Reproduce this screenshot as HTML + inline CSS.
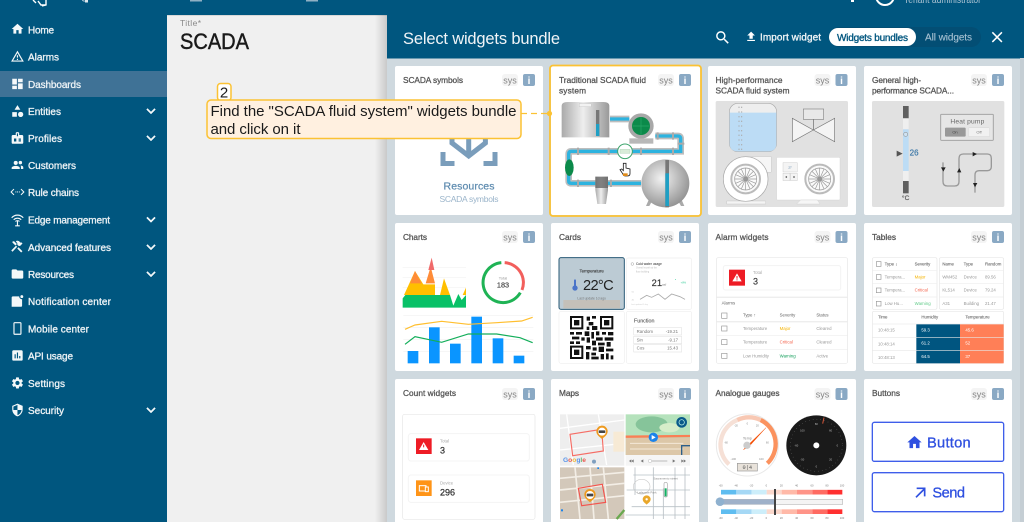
<!DOCTYPE html>
<html><head><meta charset="utf-8"><title>SCADA</title>
<style>
html,body{margin:0;padding:0;width:1024px;height:522px;overflow:hidden;background:#00567f}
svg{display:block;font-family:"Liberation Sans",sans-serif;filter:blur(.3px)}
</style></head><body>
<svg width="1024" height="522" viewBox="0 0 1024 522" xmlns="http://www.w3.org/2000/svg">
<defs>
<linearGradient id="sh" x1="0" x2="1"><stop offset="0" stop-color="#000" stop-opacity="0"/><stop offset="1" stop-color="#000" stop-opacity=".16"/></linearGradient>
<linearGradient id="tank" x1="0" x2="1"><stop offset="0" stop-color="#aaa"/><stop offset=".45" stop-color="#eee"/><stop offset="1" stop-color="#999"/></linearGradient>
<radialGradient id="sph" cx=".42" cy=".4" r=".65"><stop offset="0" stop-color="#f2f2f2"/><stop offset="1" stop-color="#8f8f8f"/></radialGradient>
<path id="chev" d="M7.41 8.59L12 13.17l4.59-4.58L18 10l-6 6-6-6z"/>
<g id="head"><rect x="0" y="8" width="16" height="12" rx="3" fill="#f4f4f4"/><text x="8" y="17.5" text-anchor="middle" font-size="9" fill="#858585">sys</text><rect x="21" y="8" width="12" height="12" rx="2" fill="#8aa9c4"/><text x="27" y="17.8" text-anchor="middle" font-size="10" font-weight="bold" fill="#fff">i</text></g>
<g id="wheel" fill="none" stroke="#999"><circle r="43" stroke-width="6" stroke="#bbb" fill="#fafafa"/><circle r="33" stroke-width="2"/><circle r="7" fill="#777" stroke="none"/><path stroke-width="2" d="M0-33V33M-33 0H33M-23-23L23 23M-23 23L23-23M-13-30L13 30M-30-13L30 13M-13 30L13-30M-30 13L30-13"/></g>
<g id="seg"><rect x="51" width="46" height="14" fill="#5fbdf0"/><rect x="97" width="46" height="14" fill="#a5d8f5"/><rect x="143" width="45" height="14" fill="#cdeefa"/><rect x="188" width="45" height="14" fill="#fbd8cc"/><rect x="233" width="46" height="14" fill="#ffb9a8"/><rect x="279" width="46" height="14" fill="#ff9488"/><rect x="325" width="45" height="14" fill="#ff6b62"/><rect x="370" width="45" height="14" fill="#ff2f2f"/></g>
<path id="pin" d="M0 20C-6 14-17 8-17 -3A17 17 0 0 1 17 -3C17 8 6 14 0 20Z"/>
</defs>

<rect width="1024" height="522" fill="#00567f"/>
<!-- top fragments -->
<g fill="none" stroke="#fff" stroke-width="1.4"><path d="M33 0l3 3M38 1l3 4h5M46 0v5l-4 1"/><circle cx="885" cy="-4" r="9" stroke-width="2"/></g>
<text x="60" y="-1" font-size="11" fill="#cfdde6">ThingsBoard</text>
<rect x="85" y="0" width="3" height="2.500" fill="#dfe8ee"/>
<rect x="190" y="0" width="12" height="1.500" fill="#8fb0c4"/><rect x="306" y="0" width="12" height="1.500" fill="#8fb0c4"/>
<rect x="851" y="0" width="3" height="2" fill="#fff"/>
<text x="904" y="3" font-size="10" fill="#a9c2d2" textLength="77" lengthAdjust="spacingAndGlyphs">Tenant administrator</text>

<!-- sidebar -->
<rect y="71" width="167" height="26" fill="#3f7296"/>
<g fill="#fff" opacity=".96">
<g transform="translate(10.500,22) scale(.58)"><path d="M10 20v-6h4v6h5v-8h3L12 3 2 12h3v8z"/></g>
<g transform="translate(10.500,49.500) scale(.58)"><path d="M1 21h22L12 2 1 21zm3.470-2L12 5.990 19.530 19H4.470zM11 16h2v2h-2zm0-6h2v4h-2z"/></g>
<g transform="translate(10.500,77) scale(.58)"><path d="M3 13h8V3H3v10zm0 8h8v-6H3v6zm10 0h8V11h-8v10zm0-18v6h8V3h-8z"/></g>
<g transform="translate(10.500,104) scale(.58)"><path d="M12 2l5 8H7zM3 14h8v8H3zM17.500 13.500a4.500 4.500 0 1 1-.01 0z"/></g>
<g transform="translate(10.500,131) scale(.58)"><path d="M20 7h-5V4c0-1.100-.9-2-2-2h-2c-1.100 0-2 .9-2 2v3H4c-1.100 0-2 .9-2 2v11c0 1.100.9 2 2 2h16c1.100 0 2-.9 2-2V9c0-1.100-.9-2-2-2zM11 4h2v5h-2zM6 13h4v5H6zm8 0h4v2h-4zm0 3h4v2h-4z" fill-rule="evenodd"/></g>
<g transform="translate(10.500,158) scale(.58)"><path d="M9 12a3.500 3.500 0 1 0 0-7 3.500 3.500 0 0 0 0 7zM2 19v-2c0-2.300 4.500-3.500 7-3.500s7 1.200 7 3.500v2zM17 11a3 3 0 1 0 0-6 3 3 0 0 0 0 6zM17.500 13c2 .2 4.500 1.200 4.500 3v3h-4v-2c0-1.700-.3-3-.5-4z"/></g>
<g transform="translate(10.500,185) scale(.58)" fill="none" stroke="#fff" stroke-width="1.800"><path d="M6 7l-5 5 5 5M18 7l5 5-5 5"/><path d="M8.500 12h1.500M11.500 12h1.500M14.500 12h1.500" stroke-width="2"/></g>
<g transform="translate(10.500,212.500) scale(.58)" fill="none" stroke="#fff" stroke-width="2"><path d="M2 9c5.500-6 14.500-6 20 0M5.500 12.500c3.500-3.500 9.500-3.500 13 0M8.500 15.500c2-1.800 5-1.800 7 0"/><path d="M12 14v9M8 23h8"/></g>
<g transform="translate(10.500,240) scale(.58)"><path d="M13.800 12.500l6.800 6.800-2.200 2.200-6.800-6.800zM17 10a4 4 0 0 1-5.300-4.800L9.200 2.500l1-1c2-.5 4 0 5.500 1.500l1.500 1.500 1.500-.5 2 2-2.800 2.800zM9.500 9.700l2 2-8 8.500-2.200-2.200zM3 3l3-1 5 5-2.500 2.500-5-5z"/></g>
<g transform="translate(10.500,267) scale(.58)"><path d="M10 4H4c-1.100 0-2 .9-2 2v12c0 1.100.9 2 2 2h16c1.100 0 2-.9 2-2V8c0-1.100-.9-2-2-2h-8l-2-2z"/></g>
<g transform="translate(10.500,294) scale(.58)"><path d="M20 9v11c0 1.100-.9 2-2 2H2V6c0-1.100.9-2 2-2h11v0c0 2.800 2.200 5 5 5zM19.500 2a2.500 2.500 0 1 1 0 5 2.500 2.500 0 0 1 0-5z"/></g>
<g transform="translate(10.500,321.500) scale(.58)"><path d="M17 1.010L7 1c-1.100 0-2 .9-2 2v18c0 1.100.9 2 2 2h10c1.100 0 2-.9 2-2V3c0-1.100-.9-1.990-2-1.990zM17 21H7V3h10v18z"/></g>
<g transform="translate(10.500,348.500) scale(.58)"><path d="M19 3H5c-1.100 0-2 .9-2 2v14c0 1.100.9 2 2 2h14c1.100 0 2-.9 2-2V5c0-1.100-.9-2-2-2zM9 17H7v-7h2v7zm4 0h-2V7h2v10zm4 0h-2v-4h2v4z"/></g>
<g transform="translate(10.500,376) scale(.58)"><path d="M19.140 12.940c.04-.3.06-.61.06-.94 0-.32-.02-.64-.07-.94l2.030-1.580c.18-.14.23-.41.12-.61l-1.920-3.320c-.12-.22-.37-.29-.59-.22l-2.390.96c-.5-.38-1.030-.7-1.620-.94l-.36-2.540c-.04-.24-.24-.41-.48-.41h-3.840c-.24 0-.43.17-.47.41l-.36 2.540c-.59.24-1.130.57-1.620.94l-2.390-.96c-.22-.08-.47 0-.59.22L2.740 8.870c-.12.21-.08.47.12.61l2.030 1.580c-.05.3-.09.63-.09.94s.02.64.07.94l-2.030 1.580c-.18.14-.23.41-.12.61l1.920 3.320c.12.22.37.29.59.22l2.390-.96c.5.38 1.030.7 1.620.94l.36 2.540c.05.24.24.41.48.41h3.840c.24 0 .44-.17.47-.41l.36-2.540c.59-.24 1.130-.56 1.620-.94l2.390.96c.22.08.47 0 .59-.22l1.920-3.320c.12-.22.07-.47-.12-.61l-2.010-1.580zM12 15.600c-1.980 0-3.600-1.620-3.600-3.600s1.620-3.600 3.600-3.600 3.600 1.620 3.600 3.600-1.620 3.600-3.600 3.600z"/></g>
<g transform="translate(10.500,403) scale(.58)"><path d="M12 1L3 5v6c0 5.550 3.840 10.740 9 12 5.160-1.260 9-6.450 9-12V5l-9-4zm0 10.990h7c-.53 4.120-3.280 7.790-7 8.940V12H5V6.300l7-3.110v8.800z"/></g>
<g stroke="#fff" stroke-width=".5">
<g transform="translate(142,102) scale(.75)"><use href="#chev"/></g>
<g transform="translate(142,129) scale(.75)"><use href="#chev"/></g>
<g transform="translate(142,210.500) scale(.75)"><use href="#chev"/></g>
<g transform="translate(142,238) scale(.75)"><use href="#chev"/></g>
<g transform="translate(142,265) scale(.75)"><use href="#chev"/></g>
<g transform="translate(142,401) scale(.75)"><use href="#chev"/></g>
</g>
</g>
<g font-size="10" fill="#eef3f6" stroke="#eef3f6" stroke-width=".3">
<text x="28" y="33.500" textLength="26">Home</text>
<text x="28" y="60.500" textLength="31">Alarms</text>
<text x="28" y="87.800" textLength="53">Dashboards</text>
<text x="28" y="115" textLength="33">Entities</text>
<text x="28" y="142" textLength="34">Profiles</text>
<text x="28" y="169" textLength="48">Customers</text>
<text x="28" y="196" textLength="51">Rule chains</text>
<text x="28" y="223.500" textLength="82">Edge management</text>
<text x="28" y="250.800" textLength="83">Advanced features</text>
<text x="28" y="278" textLength="46">Resources</text>
<text x="28" y="305" textLength="83">Notification center</text>
<text x="28" y="332.500" textLength="61">Mobile center</text>
<text x="28" y="359.500" textLength="45">API usage</text>
<text x="28" y="387" textLength="37">Settings</text>
<text x="28" y="414" textLength="36">Security</text>
</g>

<!-- main -->
<rect x="167" y="15" width="220" height="507" fill="#f0f0f0"/>
<rect x="167" y="15" width="220" height="1" fill="#d8d8d8"/>
<text x="180" y="26" font-size="8.500" fill="#888" textLength="21">Title*</text>
<text x="180" y="49" font-size="22" fill="#1a1a1a" stroke="#1a1a1a" stroke-width=".45" textLength="69" lengthAdjust="spacingAndGlyphs">SCADA</text>
<rect x="375" y="15" width="12" height="507" fill="url(#sh)"/>

<!-- panel -->
<rect x="387" y="15" width="637" height="507" fill="#cfd9df"/>
<rect x="387" y="15" width="637" height="43.500" fill="#00567f"/>
<rect x="1020" y="58" width="4" height="464" fill="#c5ced4"/>
<text x="403" y="44" font-size="16.500" fill="#f0f4f7" textLength="157">Select widgets bundle</text>
<g transform="translate(714,29) scale(.72)" fill="#fff"><path d="M15.500 14h-.79l-.28-.27C15.410 12.590 16 11.110 16 9.500 16 5.910 13.090 3 9.500 3S3 5.910 3 9.500 5.910 16 9.500 16c1.610 0 3.090-.59 4.230-1.570l.27.28v.79l5 4.990L20.490 19l-4.990-5zm-6 0C7.010 14 5 11.990 5 9.500S7.010 5 9.500 5 14 7.010 14 9.500 11.990 14 9.500 14z"/></g>
<g transform="translate(744.500,30) scale(.55)" fill="#fff"><path d="M9 16h6v-6h4l-7-7-7 7h4v6zm-4 2h14v2H5z"/></g>
<text x="760" y="40.500" font-size="10" fill="#f2f6f8" stroke="#f2f6f8" stroke-width=".3" textLength="61">Import widget</text>
<rect x="829" y="27" width="152" height="20" rx="10" fill="#034e74"/>
<rect x="829" y="28" width="87" height="18" rx="9" fill="#fff"/>
<text x="837" y="41" font-size="10" fill="#00567f" stroke="#00567f" stroke-width=".35" textLength="71">Widgets bundles</text>
<text x="925" y="40.500" font-size="10" fill="#a8c2d3" stroke="#a8c2d3" stroke-width=".1" textLength="47">All widgets</text>
<g transform="translate(988,28) scale(.76)" fill="#fff"><path d="M19 6.410L17.590 5 12 10.590 6.410 5 5 6.410 10.590 12 5 17.590 6.410 19 12 13.410 17.590 19 19 17.590 13.410 12z"/></g>

<!-- cards -->
<g fill="#fff">
<rect x="395" y="66" width="148" height="149" rx="2"/><rect x="551" y="66" width="150" height="149" rx="2"/><rect x="708" y="66" width="148" height="149" rx="2"/><rect x="864" y="66" width="148" height="149" rx="2"/>
<rect x="395" y="223" width="148" height="148" rx="2"/><rect x="551" y="223" width="148" height="148" rx="2"/><rect x="708" y="223" width="148" height="148" rx="2"/><rect x="864" y="223" width="148" height="148" rx="2"/>
<rect x="395" y="379" width="148" height="150" rx="2"/><rect x="551" y="379" width="148" height="150" rx="2"/><rect x="708" y="379" width="148" height="150" rx="2"/><rect x="864" y="379" width="148" height="150" rx="2"/>
</g>
<rect x="550" y="65.500" width="151" height="150.500" rx="3" fill="none" stroke="#fbc234" stroke-width="1.800"/>
<use href="#head" x="502" y="66"/><use href="#head" x="658" y="66"/><use href="#head" x="814.500" y="66"/><use href="#head" x="971" y="66"/>
<use href="#head" x="502" y="223"/><use href="#head" x="658" y="223"/><use href="#head" x="814.500" y="223"/><use href="#head" x="971" y="223"/>
<use href="#head" x="502" y="380"/><use href="#head" x="658" y="380"/><use href="#head" x="814.500" y="380"/><use href="#head" x="971" y="380"/>
<g font-size="8.300" fill="#555" stroke="#555" stroke-width=".28">
<text x="403" y="83" textLength="60">SCADA symbols</text>
<text x="559" y="83" textLength="87">Traditional SCADA fluid</text><text x="559" y="93.500" textLength="27">system</text>
<text x="715.500" y="83" textLength="67">High-performance</text><text x="715.500" y="93.500" textLength="74">SCADA fluid system</text>
<text x="872" y="83" textLength="49">General high-</text><text x="872" y="93.500" textLength="82">performance SCADA...</text>
<text x="403" y="240" textLength="24">Charts</text><text x="559" y="240" textLength="22">Cards</text><text x="715.500" y="240" textLength="53">Alarm widgets</text><text x="872" y="240" textLength="24">Tables</text>
<text x="403" y="396" textLength="53">Count widgets</text><text x="559" y="396" textLength="20">Maps</text><text x="715.500" y="396" textLength="64">Analogue gauges</text><text x="872" y="396" textLength="28">Buttons</text>
</g>

<!-- card 1 content -->
<g fill="none" stroke="#7a9dbb" stroke-width="5">
<path d="M443 152v11.500h11.500M483.500 163.500h11.500v-11.500"/>
<path d="M468.700 136V155M452 136v7l16.700 13 16.700-13v-7"/>
</g>
<text x="469" y="189.500" font-size="10.500" text-anchor="middle" fill="#5f8cb0" stroke="#5f8cb0" stroke-width=".25" textLength="51">Resources</text>
<text x="469" y="202" font-size="8.500" text-anchor="middle" fill="#9ab4ca" textLength="59">SCADA symbols</text>

<!-- card 2 illustration -->
<g transform="translate(386,0) scale(.33333)">
<g fill="none" stroke="#bdbdbd" stroke-width="20"><path d="M672 357H730M808 408H876Q884 408 884 416V454H556Q548 454 548 462V543Q548 550 556 550H765"/></g>
<g fill="none" stroke="#2db3df" stroke-width="10"><path d="M672 357H730M808 408H876Q884 408 884 416V454H556Q548 454 548 462V543Q548 550 556 550H765"/></g>
<g fill="#aaa"><rect x="573" y="443" width="6" height="22"/><rect x="665" y="443" width="6" height="22"/><rect x="762" y="443" width="6" height="22"/><rect x="858" y="443" width="6" height="22"/><rect x="858" y="397" width="6" height="22"/><rect x="812" y="397" width="6" height="22"/><rect x="875" y="428" width="20" height="6"/><rect x="573" y="539" width="6" height="22"/><rect x="672" y="539" width="6" height="22"/></g>
<path d="M527 318Q527 306 545 306H652Q670 306 670 318V412H527Z" fill="url(#tank)"/>
<rect x="580" y="311" width="36" height="9" fill="#f2f2f2" stroke="#bbb"/>
<rect x="630" y="330" width="10" height="78" fill="#777"/><rect x="630" y="372" width="10" height="36" fill="#1f9fc4"/>
<circle cx="765" cy="378" r="38" fill="#a8a8a8"/><rect x="730" y="415" width="72" height="16" fill="#b8b8b8"/>
<circle cx="765" cy="378" r="27" fill="#0b8a4a"/>
<path d="M765 353V403M740 378H790" stroke="#2aa868" stroke-width="2"/>
<circle cx="717" cy="454" r="22" fill="#fff" stroke="#3ea56d" stroke-width="3"/>
<path d="M702 448H732V460H702z" fill="#d8ecd8" stroke="#9cc9a8"/>
<ellipse cx="550" cy="503" rx="13" ry="25" fill="#0b8a4a"/>
<path d="M628 530H666V570L660 612H634L628 570Z" fill="url(#tank)"/><rect x="628" y="530" width="38" height="34" fill="#666" opacity=".8"/>
<path d="M790 595L780 618H790L800 600ZM885 595L895 618H885L875 600Z" fill="#aaa"/>
<circle cx="838" cy="550" r="72" fill="url(#sph)"/>
<rect x="838" y="480" width="11" height="142" fill="#777"/><rect x="838" y="520" width="11" height="98" fill="#1f9fc4"/>
<path d="M712 490h8v14l12 3v14q0 7-8 7h-6q-5 0-8-7l-8-12 5-2 5 5z" fill="#fff" stroke="#222" stroke-width="2.500"/>
<rect x="711" y="520" width="14" height="8" fill="#e08b1a"/>
</g>

<!-- card 3 illustration -->
<g transform="translate(704,0) scale(.33333)">
<rect x="35" y="303" width="397" height="318" rx="5" fill="#e1e1e1"/>
<rect x="76" y="310" width="142" height="145" rx="26" fill="#eee" stroke="#aaa" stroke-width="2"/>
<path d="M77 338H217V430Q217 454 192 454H102Q77 454 77 430Z" fill="#bcdcf5"/>
<path d="M105 320V450M113 320V450" stroke="#aaa" stroke-width="3" stroke-dasharray="4 10"/>
<rect x="298" y="327" width="61" height="31" fill="#e8e8e8" stroke="#888" stroke-width="2"/>
<path d="M328 358V390" stroke="#666" stroke-width="2"/>
<path d="M265 355L328 390L392 355V425L328 390L265 425Z" fill="#f4f4f4" stroke="#777" stroke-width="2"/>
<rect x="135" y="470" width="67" height="47" fill="#f6f6f6" stroke="#bbb"/>
<rect x="68" y="603" width="117" height="9" fill="#f4f4f4" stroke="#bbb"/>
<circle cx="125" cy="537" r="67" fill="#fff" stroke="#aaa" stroke-width="2"/>
<use href="#wheel" x="125" y="537"/>
<rect x="218" y="472" width="190" height="128" rx="3" fill="#fff" stroke="#ccc"/>
<path d="M290 600H340L348 612H278Z" fill="#f6f6f6" stroke="#ccc"/>
<use href="#wheel" x="347" y="537"/>
<rect x="237" y="488" width="43" height="28" fill="#f4f4f4" stroke="#bbb"/><text x="258" y="505" font-size="9" text-anchor="middle" fill="#4a78a0">27</text>
<rect x="237" y="520" width="21" height="22" fill="#f4f4f4" stroke="#bbb"/><rect x="260" y="520" width="20" height="22" fill="#f4f4f4" stroke="#bbb"/>
<circle cx="247" cy="531" r="2.500" fill="#555"/><circle cx="270" cy="531" r="2.500" fill="#555"/>
</g>

<!-- card 4 illustration -->
<g transform="translate(704,0) scale(.33333)">
<rect x="504" y="303" width="397" height="318" rx="5" fill="#e1e1e1"/>
<rect x="597" y="318" width="17" height="37" fill="#5f5f5f"/><rect x="597" y="355" width="17" height="33" fill="#efefef"/><rect x="597" y="388" width="17" height="125" fill="#bcdcf5"/><rect x="597" y="513" width="17" height="30" fill="#efefef"/><rect x="597" y="543" width="17" height="37" fill="#5f5f5f"/>
<circle cx="605" cy="403" r="6" fill="#cfe3f3" stroke="#999" stroke-width="2"/>
<path d="M578 452L596 461L578 470Z" fill="#555"/>
<text x="617" y="467" font-size="24" fill="#3e79a8" stroke="#3e79a8" stroke-width=".6">26</text>
<text x="605" y="600" font-size="20" text-anchor="middle" fill="#555" stroke="#555" stroke-width=".4">°C</text>
<rect x="710" y="343" width="158" height="78" rx="2" fill="#e6e6e6" stroke="#a5a5a5" stroke-width="3"/>
<text x="790" y="370" font-size="20" text-anchor="middle" fill="#666" textLength="102">Heat pump</text>
<rect x="723" y="383" width="62" height="27" rx="3" fill="#999"/><rect x="793" y="383" width="64" height="27" rx="3" fill="#f1f1f1" stroke="#ccc"/>
<text x="753" y="401" font-size="12" text-anchor="middle" fill="#444">On</text><text x="825" y="401" font-size="12" text-anchor="middle" fill="#777">Off</text>
<path d="M717 487V545Q717 558 730 558H752Q765 558 765 545V475Q765 462 778 462H850Q862 462 862 475V500Q862 512 850 512H825Q813 512 813 525V578" fill="none" stroke="#999" stroke-width="4"/>
<path d="M711 502H725L718 515ZM759 517H772L766 504ZM806 456V469L819 462ZM807 549H820L813 562Z" fill="#222"/>
</g>

<!-- charts -->
<g transform="translate(390,220) scale(.33333)">
<path d="M38 142H228M38 172H228M38 202H228" stroke="#f2f2f2" stroke-width="2"/>
<path d="M42 225L75 153L100 193H135V225ZM150 225L162 175L180 225ZM218 225L228 203V225Z" fill="#ffbf00"/>
<path d="M60 190L75 153L95 190ZM107 190L122 140L135 190Z" fill="#ff8c38"/>
<path d="M115 150L125 113L133 150Z" fill="#f06a6a"/>
<path d="M38 263V235L46 225H180L190 257L205 222L215 240L228 225V263Z" fill="#08c167"/>
<path d="M344 128A60 60 0 0 1 396 210" fill="none" stroke="#f25f5c" stroke-width="9"/>
<path d="M334 128A60 60 0 1 0 391 218" fill="none" stroke="#1fb355" stroke-width="9"/>
<text x="339" y="179" font-size="12" text-anchor="middle" fill="#999">Total</text>
<text x="339" y="203" font-size="22" text-anchor="middle" fill="#444" stroke="#444" stroke-width=".5">183</text>
<path d="M40 287H430M40 322H430M40 358H430M40 394H430" stroke="#f0f0f0" stroke-width="2"/>
<g fill="#0a95ff"><rect x="53" y="393" width="32" height="37"/><rect x="117" y="322" width="32" height="108"/><rect x="180" y="371" width="32" height="59"/><rect x="244" y="290" width="32" height="140"/><rect x="308" y="355" width="32" height="75"/><rect x="371" y="407" width="32" height="23"/></g>
<path d="M45 328L75 315L155 304L235 313L320 308L395 303L428 292" fill="none" stroke="#ffbf2f" stroke-width="3.500"/>
<path d="M45 373L75 350L155 367L235 342L320 342L390 353L428 368" fill="none" stroke="#13ae5a" stroke-width="3.500"/>
</g>

<!-- cards card -->
<g transform="translate(390,220) scale(.33333)">
<rect x="507" y="113" width="196" height="155" rx="6" fill="#bccbd4" stroke="#2a5b77" stroke-width="3"/>
<rect x="520" y="240" width="170" height="25" fill="#c9b9a6" opacity=".6"/>
<text x="605" y="157" font-size="13" text-anchor="middle" fill="#333" stroke="#333" stroke-width=".3">Temperature</text>
<text x="625" y="210" font-size="44" text-anchor="middle" fill="#222" textLength="92">22°C</text>
<rect x="552" y="178" width="6" height="24" rx="3" fill="#4a74c9"/><circle cx="555" cy="204" r="8" fill="#4a74c9"/>
<text x="605" y="238" font-size="10" text-anchor="middle" fill="#777">Last update 1d ago</text>
<rect x="709" y="114" width="196" height="154" rx="6" fill="#fff" stroke="#eee" stroke-width="2"/>
<circle cx="727" cy="132" r="4" fill="none" stroke="#777"/>
<text x="738" y="135" font-size="10" fill="#555" stroke="#555" stroke-width=".2">Cold water usage</text>
<text x="738" y="146" font-size="7" fill="#bbb">Overall month at the</text><text x="738" y="157" font-size="7" fill="#bbb">floor building</text>
<text x="785" y="198" font-size="28" fill="#333" stroke="#333" stroke-width=".5">21</text><text x="817" y="198" font-size="10" fill="#888">ref</text>
<text x="855" y="182" font-size="9" fill="#3c9">▪</text><text x="872" y="190" font-size="8" fill="#3c9">+8%</text>
<path d="M750 238L770 226L785 232L805 222L825 238L845 222L870 230L885 238" fill="none" stroke="#aaa" stroke-width="2.500"/>
<text x="725" y="218" font-size="6" fill="#bbb">55</text><text x="725" y="241" font-size="6" fill="#bbb">45</text><text x="723" y="255" font-size="6" fill="#ccc">Last updated 1 day</text>
<rect x="507" y="274" width="196" height="156" rx="6" fill="#fff" stroke="#eee" stroke-width="2"/>
<g fill="#111">
<path d="M540 288h40v40h-40zm6 6v28h28v-28zm6 6h16v16h-16z" fill-rule="evenodd"/>
<path d="M630 288h40v40h-40zm6 6v28h28v-28zm6 6h16v16h-16z" fill-rule="evenodd"/>
<path d="M540 377h40v40h-40zm6 6v28h28v-28zm6 6h16v16h-16z" fill-rule="evenodd"/>
<path d="M590 290h10v12h-10zM606 288h12v8h-12zM596 306h14v10h-14zM590 320h8v10h-8zM606 318h16v12h-16zM540 336h12v8h-12zM558 336h18v8h-18zM584 334h14v14h-14zM604 336h8v20h-8zM618 334h10v12h-10zM636 336h12v8h-12zM654 336h16v10h-16zM546 350h22v8h-22zM574 352h10v10h-10zM590 352h10v16h-10zM618 352h20v10h-20zM644 352h26v10h-26zM540 364h12v8h-12zM558 364h12v8h-12zM606 362h12v14h-12zM624 368h20v8h-20zM650 366h12v14h-12zM588 378h14v10h-14zM608 382h12v10h-12zM626 380h16v16h-16zM648 386h22v8h-22zM588 396h10v22h-10zM604 398h14v8h-14zM604 410h22v8h-22zM632 402h10v16h-10zM648 400h8v18h-8zM662 406h8v12h-8z"/>
</g>
<rect x="709" y="274" width="196" height="156" rx="6" fill="#fff" stroke="#eee" stroke-width="2"/>
<text x="732" y="307" font-size="16" fill="#555" stroke="#555" stroke-width=".3">Function</text>
<g fill="#fff" stroke="#e6e6e6" stroke-width="2"><rect x="731" y="323" width="144" height="22"/><rect x="731" y="349" width="144" height="22"/><rect x="731" y="374" width="144" height="22"/></g>
<g font-size="13" fill="#777"><text x="740" y="339">Random</text><text x="740" y="364">Sin</text><text x="740" y="389">Cos</text><text x="864" y="339" text-anchor="end">-19.21</text><text x="864" y="364" text-anchor="end">-9.17</text><text x="864" y="389" text-anchor="end">15.43</text></g>
</g>

<!-- alarm -->
<g transform="translate(704,220) scale(.33333)">
<rect x="37" y="113" width="394" height="317" rx="6" fill="#fff" stroke="#e6e6e6" stroke-width="2"/>
<rect x="58" y="137" width="352" height="73" rx="6" fill="#fff" stroke="#f3f3f3" stroke-width="3"/>
<rect x="75" y="149" width="48" height="48" fill="#ee1c25"/>
<path d="M99 160L113 184H85Z" fill="#fff"/><rect x="97.500" y="168" width="3" height="8" fill="#ee1c25"/><rect x="97.500" y="178" width="3" height="3" fill="#ee1c25"/>
<text x="147" y="162" font-size="13" fill="#aaa">Total</text>
<text x="147" y="194" font-size="27" fill="#333" stroke="#333" stroke-width=".4">3</text>
<path d="M38 232H430" stroke="#eee" stroke-width="4"/>
<text x="53" y="253" font-size="13" fill="#666">Alarms</text>
<path d="M38 305H430" stroke="#eee" stroke-width="4"/><path d="M38 346H430M38 388H430" stroke="#eee" stroke-width="2"/>
<g fill="#fff" stroke="#999" stroke-width="2"><rect x="53" y="279" width="16" height="16"/><rect x="53" y="318" width="16" height="15"/><rect x="53" y="359" width="16" height="15"/><rect x="53" y="400" width="16" height="15"/></g>
<g font-size="13" fill="#666"><text x="117" y="289">Type ↑</text><text x="227" y="289">Severity</text><text x="337" y="289">Status</text></g>
<g font-size="13" fill="#999"><text x="117" y="330">Temperature</text><text x="117" y="371">Temperature</text><text x="117" y="412">Low Humidity</text><text x="337" y="330">Cleared</text><text x="337" y="371">Cleared</text><text x="337" y="412">Active</text></g>
<text x="227" y="330" font-size="13" fill="#f5b301">Major</text><text x="227" y="371" font-size="13" fill="#f4664f">Critical</text><text x="227" y="412" font-size="13" fill="#0f9d58">Warning</text>
</g>

<!-- tables -->
<g transform="translate(704,220) scale(.33333)">
<rect x="505" y="113" width="194" height="155" rx="5" fill="#fff" stroke="#e6e6e6" stroke-width="2"/>
<rect x="706" y="113" width="193" height="155" rx="5" fill="#fff" stroke="#e6e6e6" stroke-width="2"/>
<rect x="505" y="274" width="394" height="156" rx="5" fill="#fff" stroke="#e6e6e6" stroke-width="2"/>
<path d="M505 151H699M505 191H699M505 231H699M706 151H899M706 191H899M706 231H899" stroke="#eee" stroke-width="2"/>
<g fill="#fff" stroke="#999" stroke-width="2"><rect x="517" y="125" width="14" height="14"/><rect x="517" y="164" width="14" height="14"/><rect x="517" y="204" width="14" height="14"/><rect x="517" y="244" width="14" height="14"/></g>
<g font-size="13" fill="#666" stroke="#666" stroke-width=".2"><text x="542" y="136">Type ↓</text><text x="632" y="136">Severity</text><text x="715" y="136">Name</text><text x="779" y="136">Type</text><text x="843" y="136">Random</text><text x="522" y="296">Time</text><text x="652" y="296">Humidity</text><text x="784" y="296">Temperature</text></g>
<g font-size="13" fill="#999"><text x="542" y="176">Tempera...</text><text x="542" y="215">Tempera...</text><text x="542" y="255">Low Hu...</text><text x="715" y="176">WM452</text><text x="715" y="215">KL514</text><text x="715" y="255">A31</text><text x="779" y="176">Device</text><text x="779" y="215">Device</text><text x="779" y="255">Building</text><text x="843" y="176">89.56</text><text x="843" y="215">79.24</text><text x="843" y="255">21.47</text><text x="522" y="335">10:48:15</text><text x="522" y="376">10:48:14</text><text x="522" y="417">10:48:13</text></g>
<text x="632" y="176" font-size="13" fill="#f5b301">Major</text><text x="632" y="215" font-size="13" fill="#f4664f">Critical</text><text x="632" y="255" font-size="13" fill="#5fca87">Warning</text>
<path d="M505 312H899" stroke="#eee" stroke-width="2"/>
<rect x="637" y="313" width="131" height="117" fill="#005580"/><rect x="768" y="313" width="131" height="117" fill="#ff7f57"/>
<path d="M505 352H899M505 392H899" stroke="#e6e6e6" stroke-width="2"/>
<g font-size="13" fill="#fff"><text x="652" y="335">59.3</text><text x="652" y="374">61.2</text><text x="652" y="414">64.5</text><text x="784" y="335">45.6</text><text x="784" y="374">52</text><text x="784" y="414">37</text></g>
</g>

<!-- count -->
<g transform="translate(390,375) scale(.33333)">
<rect x="38" y="118" width="397" height="315" rx="6" fill="#fff" stroke="#e6e6e6" stroke-width="2"/>
<rect x="55" y="176" width="363" height="82" rx="8" fill="#fff" stroke="#f4f4f4" stroke-width="3"/>
<rect x="55" y="300" width="363" height="82" rx="8" fill="#fff" stroke="#f4f4f4" stroke-width="3"/>
<rect x="78" y="190" width="47" height="47" fill="#ee1c25"/>
<path d="M101 201L115 225H87Z" fill="#fff"/><rect x="99.500" y="209" width="3" height="8" fill="#ee1c25"/>
<rect x="78" y="316" width="47" height="47" fill="#ff9417"/>
<rect x="88" y="332" width="20" height="16" fill="none" stroke="#fff" stroke-width="3"/><rect x="106" y="336" width="9" height="14" fill="#ff9417" stroke="#fff" stroke-width="3"/>
<text x="150" y="202" font-size="13" fill="#aaa">Total</text><text x="150" y="235" font-size="27" fill="#333" stroke="#333" stroke-width=".7">3</text>
<text x="150" y="329" font-size="13" fill="#aaa">Device</text><text x="150" y="361" font-size="27" fill="#333" stroke="#333" stroke-width=".8">296</text>
</g>

<!-- maps -->
<g transform="translate(390,375) scale(.33333)">
<rect x="510" y="118" width="193" height="154" fill="#eeeeee"/>
<path d="M530 118L550 270M625 118L650 270M510 160L703 135M510 225L703 205" stroke="#fff" stroke-width="4" fill="none"/>
<rect x="670" y="170" width="33" height="60" fill="#f7ead5"/>
<path d="M540 178L635 163L640 228L548 242Z" fill="none" stroke="#f56d65" stroke-width="3.500"/>
<use href="#pin" x="636" y="172" fill="#ee9a1f"/><circle cx="636" cy="170" r="12" fill="#fff"/><rect x="626" y="166" width="20" height="8" rx="2" fill="#444"/>
<g font-size="20" font-weight="bold"><text x="519" y="261" fill="#5a94e8">G<tspan fill="#e8594d">o</tspan><tspan fill="#f0b93a">o</tspan><tspan fill="#5a94e8">g</tspan><tspan fill="#5cb36b">l</tspan><tspan fill="#e8594d">e</tspan></text></g>
<circle cx="612" cy="260" r="6" fill="#7f9fbf"/>
<rect x="707" y="118" width="193" height="122" fill="#b5e2bc"/>
<ellipse cx="785" cy="148" rx="48" ry="24" fill="#86c49a"/><ellipse cx="838" cy="158" rx="30" ry="14" fill="#d6edc9"/>
<rect x="707" y="188" width="193" height="52" fill="#dcc7a8"/>
<path d="M707 185L900 183" stroke="#fa7f55" stroke-width="7"/>
<path d="M720 205H880M720 222H880" stroke="#f4e9d7" stroke-width="3"/>
<path d="M875 240V212H900" stroke="#2d5f8a" stroke-width="4" fill="none"/>
<circle cx="790" cy="187" r="14" fill="#1b83ea"/><path d="M785 180L797 187L785 194Z" fill="#fff"/>
<circle cx="875" cy="142" r="16" fill="#0a5a8a"/><circle cx="875" cy="142" r="8" fill="none" stroke="#cfe" stroke-width="2"/>
<rect x="707" y="240" width="193" height="32" fill="#f5f5f5"/>
<path d="M717 253L724 258V253L731 258L724 263V258L717 263Z" fill="#777" transform="matrix(-1 0 0 1 1448 0)"/>
<path d="M760 253V263L752 258ZM848 253V263L856 258ZM874 253L881 258V253L888 258L881 263V258L874 263Z" fill="#777"/>
<path d="M785 258H832" stroke="#bbb" stroke-width="3"/><circle cx="780" cy="258" r="5" fill="#fff" stroke="#999"/>
<rect x="510" y="277" width="193" height="155" fill="#d3c8ba"/>
<path d="M555 277L570 432M640 277L655 432M510 310L703 292M510 382L703 362M510 345L703 325M600 277L612 432" stroke="#f3eee6" stroke-width="5" fill="none"/>
<path d="M565 340L637 328L647 382L575 392Z" fill="none" stroke="#f2564f" stroke-width="3.500"/>
<use href="#pin" x="600" y="362" fill="#ee9a1f"/><circle cx="600" cy="360" r="12" fill="#fff"/><rect x="590" y="356" width="20" height="8" rx="2" fill="#444"/>
<path d="M680 432L703 405" stroke="#6aa84f" stroke-width="7"/><rect x="513" y="403" width="6" height="6" fill="#1b83ea"/><rect x="622" y="277" width="5" height="5" fill="#1b83ea"/>
<rect x="707" y="277" width="193" height="155" fill="#fff"/>
<path d="M730 300H900M710 345H900M790 277V432M855 277V432M885 277V432M725 395H900M735 277V360M707 420H900M820 340V432" stroke="#b9c1c6" stroke-width="2.500" fill="none"/>
<ellipse cx="755" cy="335" rx="25" ry="22" fill="none" stroke="#ccc" stroke-width="2"/>
<text x="790" y="314" font-size="9" fill="#888">Sacramento street</text><text x="742" y="355" font-size="9" fill="#888">Lafayette Park</text>
<rect x="822" y="322" width="10" height="44" rx="5" fill="#fff" stroke="#aaa" stroke-width="2"/><rect x="824" y="340" width="6" height="24" fill="#12b163"/>
<g transform="translate(770,375) scale(.7)"><use href="#pin" fill="#e9a72a"/><circle cy="-3" r="5" fill="#fff"/></g>
</g>

<!-- gauges -->
<g transform="translate(704,375) scale(.33333)">
<circle cx="130" cy="210" r="93" fill="#fff" stroke="#e8e8e8" stroke-width="3"/>
<path d="M75 268A80 80 0 0 1 100 135" fill="none" stroke="#f6e0d6" stroke-width="13"/>
<path d="M100 135A80 80 0 0 1 170 135" fill="none" stroke="#f8c8b3" stroke-width="13"/>
<path d="M170 135A80 80 0 0 1 190 265" fill="none" stroke="#fb925e" stroke-width="13"/>
<g font-size="8" fill="#888" text-anchor="middle"><text x="88" y="255">-100</text><text x="66" y="205">-60</text><text x="96" y="155">-20</text><text x="130" y="148">0</text><text x="160" y="155">20</text><text x="190" y="205">60</text><text x="172" y="255">100</text></g>
<text x="130" y="193" font-size="11" text-anchor="middle" fill="#888">Temp</text>
<path d="M118 224L186 158L134 216Z" fill="#f54b00" stroke="#f54b00"/>
<circle cx="129" cy="211" r="11" fill="#ccc"/>
<rect x="100" y="265" width="60" height="23" fill="#e8e2da" stroke="#999" stroke-width="2"/>
<text x="130" y="282" font-size="16" text-anchor="middle" fill="#555" font-family="Liberation Mono">0|4</text>
<circle cx="337" cy="211" r="90" fill="#1a1a1a"/>
<circle cx="337" cy="211" r="78" fill="none" stroke="#777" stroke-width="2" stroke-dasharray="1.500 10"/>
<path d="M360 128L356 146" stroke="#d2563a" stroke-width="3"/>
<g font-size="8" fill="#bbb" text-anchor="middle"><text x="337" y="150">80</text><text x="295" y="170">100</text><text x="380" y="170">60</text><text x="277" y="214">-60</text><text x="400" y="214">0</text><text x="295" y="256">-50</text><text x="380" y="256">20</text><text x="337" y="277">0</text></g>
<circle cx="337" cy="211" r="9" fill="#fff"/>
<g font-size="8" fill="#777" text-anchor="middle"><text x="50" y="335">-60</text><text x="96" y="335">-40</text><text x="142" y="335">-20</text><text x="187" y="335">0</text><text x="232" y="335">20</text><text x="278" y="335">40</text><text x="324" y="335">60</text><text x="369" y="335">80</text><text x="414" y="335">100</text><text x="50" y="432">-60</text><text x="96" y="432">-40</text><text x="142" y="432">-20</text><text x="187" y="432">0</text><text x="232" y="432">20</text><text x="278" y="432">40</text><text x="324" y="432">60</text><text x="369" y="432">80</text><text x="414" y="432">100</text></g>
<use href="#seg" y="344.500"/><use href="#seg" y="403"/>
<rect x="48" y="373" width="368" height="15" fill="#f4f4f4" stroke="#bbb" stroke-width="2"/>
<rect x="48" y="373" width="164" height="15" fill="#9fb1c9"/>
<circle cx="48" cy="380" r="13" fill="#8fb1cf"/>
<rect x="210" y="342" width="6" height="78" fill="#444"/>
</g>

<!-- buttons -->
<g transform="translate(704,375) scale(.33333)">
<rect x="505" y="142" width="394" height="117" rx="6" fill="#fff" stroke="#3f5eea" stroke-width="4"/>
<rect x="505" y="293" width="394" height="117" rx="6" fill="#fff" stroke="#3f5eea" stroke-width="4"/>
<g transform="translate(605.700,176.500) scale(2.150)"><path d="M10 20v-6h4v6h5v-8h3L12 3 2 12h3v8z" fill="#2f50e0"/></g>
<text x="669" y="217" font-size="44" fill="#2f50e0" stroke="#2f50e0" stroke-width=".9" textLength="131">Button</text>
<path d="M636 367L661 342M638 340H662V364" fill="none" stroke="#2f50e0" stroke-width="5"/>
<text x="685" y="368" font-size="44" fill="#2f50e0" stroke="#2f50e0" stroke-width=".9" textLength="98">Send</text>
</g>

<!-- tooltip -->
<path d="M521 113.500H549" stroke="#fbc234" stroke-width="1.300" stroke-dasharray="6 4"/>
<circle cx="549.500" cy="113.500" r="2.600" fill="#fbc234"/>
<rect x="217.500" y="83.500" width="13.500" height="17" rx="3" fill="#fff" stroke="#fbc234" stroke-width="1.500"/>
<text x="224" y="97.500" font-size="15" text-anchor="middle" fill="#1a1a1a">2</text>
<rect x="207" y="100" width="314" height="38.500" rx="4" fill="#fff0e0" stroke="#fbc234" stroke-width="1.500"/>
<text x="210.500" y="116" font-size="15" fill="#1a1a1a" textLength="306">Find the "SCADA fluid system" widgets bundle</text>
<text x="210.500" y="134" font-size="15" fill="#1a1a1a" textLength="90">and click on it</text>
</svg>
</body></html>
